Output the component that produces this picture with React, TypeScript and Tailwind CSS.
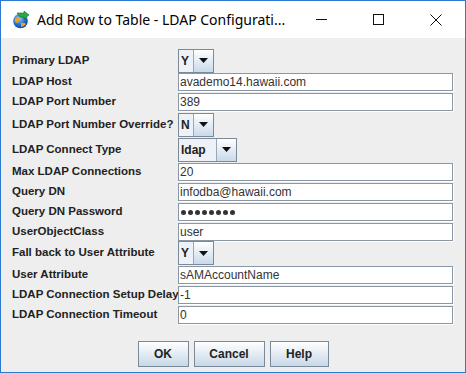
import React from "react";

const font = { fontFamily: '"Liberation Sans", Arial, sans-serif' };

function Arrow() {
  return (
    <svg width="9" height="5" viewBox="0 0 9 5">
      <path d="M0 0 H9 L4.5 5 Z" fill="#111" />
    </svg>
  );
}

function Combo({ value, textW }: { value: string; textW: number }) {
  return (
    <div className="flex items-center h-full">
      <div className="flex h-[24px] border border-[#7a8a99] bg-[#eef1f5]">
        <div
          className="flex items-center pl-[2px] font-bold text-[12px] text-[#222] border-r border-[#9aa8b6]"
          style={{ width: textW }}
        >
          {value}
        </div>
        <div className="w-[19px] flex items-center justify-center bg-gradient-to-b from-[#ffffff] to-[#c9d9ea]">
          <Arrow />
        </div>
      </div>
    </div>
  );
}

function Field({ value, password }: { value: string; password?: boolean }) {
  return (
    <div className="flex items-start h-full pt-px">
      <div className="w-[275px] h-[18px] bg-white border border-[#8a97a4] shadow-[1px_1px_0_#ffffff] flex items-center pl-[1px] text-[12px] text-[#333]">
        {password ? (
          <div className="flex gap-[2px] ml-[1px]">
            {Array.from({ length: 8 }).map((_, i) => (
              <span key={i} className="w-[5px] h-[5px] rounded-full bg-[#333]" />
            ))}
          </div>
        ) : (
          value
        )}
      </div>
    </div>
  );
}

type Row = { label: string; h: number; kind: "field" | "combo" | "pw"; value: string; w?: number };

const rows: Row[] = [
  { label: "Primary LDAP", h: 23, kind: "combo", value: "Y", w: 15 },
  { label: "LDAP Host", h: 20, kind: "field", value: "avademo14.hawaii.com" },
  { label: "LDAP Port Number", h: 20, kind: "field", value: "389" },
  { label: "LDAP Port Number Override?", h: 25, kind: "combo", value: "N", w: 15 },
  { label: "LDAP Connect Type", h: 25, kind: "combo", value: "ldap", w: 38 },
  { label: "Max LDAP Connections", h: 20, kind: "field", value: "20" },
  { label: "Query DN", h: 20, kind: "field", value: "infodba@hawaii.com" },
  { label: "Query DN Password", h: 20, kind: "pw", value: "" },
  { label: "UserObjectClass", h: 19, kind: "field", value: "user" },
  { label: "Fall back to User Attribute", h: 24, kind: "combo", value: "Y", w: 15 },
  { label: "User Attribute", h: 20, kind: "field", value: "sAMAccountName" },
  { label: "LDAP Connection Setup Delay", h: 20, kind: "field", value: "-1" },
  { label: "LDAP Connection Timeout", h: 20, kind: "field", value: "0" },
];

function Btn({ children, w }: { children: React.ReactNode; w: number }) {
  return (
    <div
      className="h-[26px] flex items-center justify-center border border-[#7a8a99] bg-gradient-to-b from-[#ffffff] to-[#c8d8e8] font-bold text-[12px] text-[#222]"
      style={{ width: w }}
    >
      {children}
    </div>
  );
}

function GlobeIcon() {
  return (
    <svg width="18" height="18" viewBox="0 0 18 18">
      <defs>
        <radialGradient id="g" cx="40%" cy="35%" r="70%">
          <stop offset="0" stopColor="#8fd0ff" />
          <stop offset="0.6" stopColor="#1f6fd0" />
          <stop offset="1" stopColor="#0d3f8a" />
        </radialGradient>
      </defs>
      <circle cx="8.5" cy="10" r="7.3" fill="url(#g)" />
      <path d="M3 7 Q6 5 8 8 Q7 11 4 12 Q2 10 3 7Z" fill="#f0a020" />
      <path d="M9 12 Q12 11 14 13 Q12 16 9 16Z" fill="#f0a020" />
      <path d="M5 2 L12 2 L12 0 L17 4 L12 8 L12 6 L8 6 Z" fill="#2fa84a" stroke="#1a6a2a" strokeWidth="0.6" />
    </svg>
  );
}

export default function App() {
  return (
    <div className="w-[466px] h-[373px] flex flex-col border border-[#2a7ad2] bg-white overflow-hidden" style={font}>
      <div className="h-[37px] flex items-center bg-white">
        <div className="ml-[11px] mt-[1px] shrink-0">
          <GlobeIcon />
        </div>
        <div
          className="ml-[7px] text-[14px] text-black whitespace-nowrap"
          style={{ fontFamily: '"Noto Sans", "Open Sans", sans-serif' }}
        >
          Add Row to Table - LDAP Configurati...
        </div>
        <div className="ml-auto flex items-center h-full shrink-0">
          <div className="w-[57px] h-full flex items-center justify-center">
            <svg width="11" height="11" viewBox="0 0 11 11"><path d="M0 5.5 H11" stroke="#111" strokeWidth="1" /></svg>
          </div>
          <div className="w-[57px] h-full flex items-center justify-center">
            <svg width="11" height="11" viewBox="0 0 11 11"><rect x="0.5" y="0.5" width="10" height="10" fill="none" stroke="#111" strokeWidth="1" /></svg>
          </div>
          <div className="w-[58px] h-full flex items-center justify-center">
            <svg width="12" height="12" viewBox="0 0 12 12"><path d="M0.5 0.5 L11.5 11.5 M11.5 0.5 L0.5 11.5" stroke="#111" strokeWidth="1" /></svg>
          </div>
        </div>
      </div>
      <div className="flex-1 bg-[#eeeeee] flex flex-col pt-[11px] pl-[11px]">
        <div className="grid grid-cols-[166px_277px]">
          {rows.map((r, i) => (
            <React.Fragment key={i}>
              <div
                className="flex items-center font-bold text-[11.5px] text-[#222] whitespace-nowrap"
                style={{ height: r.h }}
              >
                {r.label}
              </div>
              <div style={{ height: r.h }}>
                {r.kind === "combo" ? (
                  <Combo value={r.value} textW={r.w ?? 15} />
                ) : (
                  <Field value={r.value} password={r.kind === "pw"} />
                )}
              </div>
            </React.Fragment>
          ))}
        </div>
        <div className="flex justify-center gap-[5px] mt-[16px] pr-[11px]">
          <Btn w={51}>OK</Btn>
          <Btn w={71}>Cancel</Btn>
          <Btn w={59}>Help</Btn>
        </div>
      </div>
    </div>
  );
}
